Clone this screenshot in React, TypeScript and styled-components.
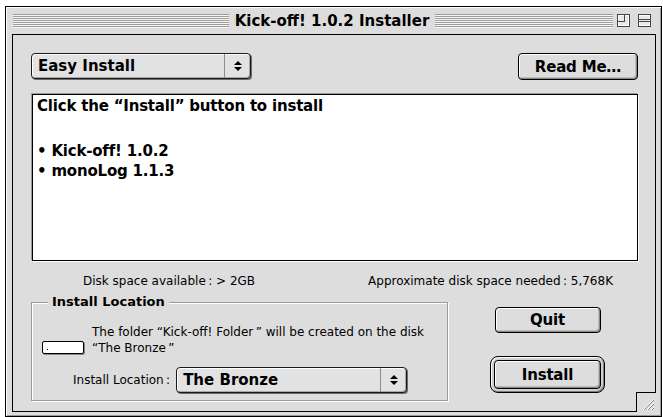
import React from "react";
import styled, { createGlobalStyle } from "styled-components";

const chicago = `"DejaVu Sans", "Liberation Sans", sans-serif`;
const geneva = `"DejaVu Sans", "Liberation Sans", sans-serif`;

const GlobalStyle = createGlobalStyle`
  html, body {
    margin: 0;
    padding: 0;
    background: #ffffff;
  }
  body {
    width: 663px;
    height: 417px;
    overflow: hidden;
  }
`;

const Desk = styled.div`
  width: 663px;
  height: 417px;
  box-sizing: border-box;
  padding: 6px 0 0 5px;
  background: #ffffff;
`;

const Window = styled.div`
  box-sizing: border-box;
  width: 657px;
  height: 411px;
  border: 1px solid #000000;
  background: #dddddd;
  box-shadow: inset 1px 1px 0 #ffffff, inset -1px -1px 0 #9a9a9a;
  display: flex;
  flex-direction: column;
  padding: 0 5px 4px 6px;
`;

const TitleBar = styled.div`
  height: 27px;
  flex: none;
  display: grid;
  grid-template-columns: 1fr auto 1fr;
  align-items: center;
  padding: 0 5px 0 1px;
`;

const Stripes = styled.div`
  height: 14px;
  flex: 1;
  background: repeating-linear-gradient(
    to bottom,
    #9c9c9c 0 1px,
    #f6f6f6 1px 2px
  );
`;

const TitleText = styled.div`
  padding: 0 6px;
  font: bold 15px/18px ${chicago};
  color: #000000;
  white-space: nowrap;
`;

const TitleRight = styled.div`
  display: flex;
  align-items: center;
`;

const Widgets = styled.div`
  display: flex;
  gap: 8px;
  margin-left: 4px;
`;

const Content = styled.div`
  position: relative;
  flex: 1;
  border: 1px solid #000000;
  background: #dddddd;
  padding: 18px 17px 0 18px;
  display: flex;
  flex-direction: column;
`;

const TopRow = styled.div`
  display: flex;
  justify-content: space-between;
  align-items: flex-start;
`;

const Popup = styled.div<{ $width: number; $height: number }>`
  box-sizing: border-box;
  width: ${(p) => p.$width}px;
  height: ${(p) => p.$height}px;
  border: 1px solid #1a1a1a;
  border-radius: 4px;
  background: #e2e2e2;
  box-shadow: inset 1px 1px 0 #ffffff, inset -1px -1px 0 #a8a8a8,
    1px 1px 0 #6a6a6a;
  display: flex;
  align-items: stretch;
  font: bold 15px/18px ${chicago};
  color: #000000;
`;

const PopupLabel = styled.div`
  flex: 1;
  display: flex;
  align-items: center;
  padding-left: 6px;
  white-space: nowrap;
`;

const PopupArrow = styled.div`
  width: 25px;
  border-left: 1px solid #8c8c8c;
  display: flex;
  align-items: center;
  justify-content: center;
`;

const Button = styled.div<{ $width: number; $height: number }>`
  box-sizing: border-box;
  width: ${(p) => p.$width}px;
  height: ${(p) => p.$height}px;
  border: 1px solid #000000;
  border-radius: 4px;
  background: #dddddd;
  box-shadow: inset 1px 1px 0 #ffffff, inset -1px -1px 0 #8a8a8a,
    inset -2px -2px 0 #bcbcbc;
  display: flex;
  align-items: center;
  justify-content: center;
  font: bold 15px/18px ${chicago};
  letter-spacing: -0.2px;
  color: #000000;
  white-space: nowrap;
`;

const ListBox = styled.div`
  box-sizing: border-box;
  margin: 14px 0 0 1px;
  height: 167px;
  background: #ffffff;
  border: 1px solid #000000;
  box-shadow: -1px -1px 0 #9a9a9a, 1px 1px 0 #ffffff;
  padding: 1px 4px;
  font: bold 15px/20px ${chicago};
  letter-spacing: -0.2px;
  color: #000000;
`;

const ListLine = styled.div<{ $gap?: number }>`
  margin-bottom: ${(p) => p.$gap ?? 0}px;
  white-space: nowrap;
`;

const DiskRow = styled.div`
  margin-top: 13px;
  display: flex;
  justify-content: space-between;
  padding: 0 25px 0 52px;
  font: 12px/14px ${geneva};
  color: #000000;
`;

const Lower = styled.div`
  margin-top: 6px;
  display: flex;
  align-items: flex-start;
`;

const GroupBox = styled.fieldset`
  margin: 0;
  width: 417px;
  box-sizing: border-box;
  min-inline-size: 0;
  padding: 14px 0 7px 0;
  border: 1px solid #9a9a9a;
  box-shadow: inset 1px 1px 0 #ffffff, 1px 1px 0 #ffffff;
`;

const GroupTitle = styled.legend`
  margin-left: 16px;
  padding: 0 4px;
  background: #dddddd;
  font: bold 13px/16px ${chicago};
  color: #000000;
`;

const InfoRow = styled.div`
  display: flex;
  align-items: flex-end;
  padding-left: 10px;
`;

const DiskIcon = styled.div`
  position: relative;
  box-sizing: border-box;
  width: 42px;
  height: 13px;
  margin-bottom: 2px;
  border: 1px solid #000000;
  border-radius: 2px;
  background: #ffffff;
  box-shadow: 1px 1px 0 #8a8a8a;

  &::after {
    content: "";
    position: absolute;
    left: 4px;
    bottom: 3px;
    width: 1px;
    height: 1px;
    background: #000000;
  }
`;

const InfoText = styled.div`
  margin-left: 8px;
  font: 12px/16px ${geneva};
  color: #000000;
  white-space: nowrap;
`;

const LocationRow = styled.div`
  margin-top: 11px;
  display: flex;
  align-items: center;
  gap: 6px;
  padding-left: 41px;
`;

const FieldLabel = styled.span`
  font: 12px/14px ${geneva};
  color: #000000;
  white-space: nowrap;
`;

const ButtonColumn = styled.div`
  flex: 1;
  display: flex;
  flex-direction: column;
  align-items: center;
  padding: 13px 0 0 9px;
`;

const DefaultRing = styled.div`
  margin-top: 23px;
  border: 1px solid #000000;
  border-radius: 8px;
  padding: 3px;
  background: #cfcfcf;
  box-shadow: inset 1px 1px 0 #ffffff, inset -1px -1px 0 #7c7c7c;
`;

const GrowBox = styled.div`
  position: absolute;
  right: -1px;
  bottom: -1px;
  width: 19px;
  height: 19px;
  border-left: 1px solid #000000;
  border-top: 1px solid #000000;
  background: #dddddd;
  display: flex;
  align-items: flex-end;
  justify-content: flex-end;
`;

const UpDown = () => (
  <svg width="8" height="12" viewBox="0 0 8 12">
    <polygon points="0,5 4,1 8,5" fill="#000" />
    <polygon points="0,7 4,11 8,7" fill="#000" />
  </svg>
);

const ZoomWidget = () => (
  <svg width="13" height="13" viewBox="0 0 13 13">
    <rect x="0.5" y="0.5" width="12" height="12" fill="#e8e8e8" stroke="#444" />
    <rect x="1.5" y="1.5" width="10" height="10" fill="none" stroke="#fff" />
    <rect x="0.5" y="0.5" width="7" height="7" fill="none" stroke="#444" />
  </svg>
);

const ShadeWidget = () => (
  <svg width="13" height="13" viewBox="0 0 13 13">
    <rect x="0.5" y="0.5" width="12" height="12" fill="#e8e8e8" stroke="#444" />
    <rect x="1.5" y="1.5" width="10" height="10" fill="none" stroke="#fff" />
    <line x1="0.5" y1="5.5" x2="12.5" y2="5.5" stroke="#444" />
    <line x1="0.5" y1="7.5" x2="12.5" y2="7.5" stroke="#444" />
  </svg>
);

const Grip = () => (
  <svg width="17" height="17" viewBox="0 0 17 17">
    {[0, 4, 8].map((o) => (
      <g key={o}>
        <line x1={4 + o} y1={15} x2={15} y2={4 + o} stroke="#ffffff" strokeWidth="1" />
        <line x1={5 + o} y1={15} x2={15} y2={5 + o} stroke="#8a8a8a" strokeWidth="1" />
      </g>
    ))}
  </svg>
);

export default function App() {
  return (
    <>
      <GlobalStyle />
      <Desk>
        <Window>
          <TitleBar>
            <Stripes />
            <TitleText>Kick-off! 1.0.2 Installer</TitleText>
            <TitleRight>
              <Stripes />
              <Widgets>
                <ZoomWidget />
                <ShadeWidget />
              </Widgets>
            </TitleRight>
          </TitleBar>

          <Content>
            <TopRow>
              <Popup $width={220} $height={26}>
                <PopupLabel>Easy Install</PopupLabel>
                <PopupArrow>
                  <UpDown />
                </PopupArrow>
              </Popup>
              <Button $width={120} $height={27}>Read Me…</Button>
            </TopRow>

            <ListBox>
              <ListLine $gap={25}>Click the “Install” button to install</ListLine>
              <ListLine>• Kick-off! 1.0.2</ListLine>
              <ListLine>• monoLog 1.1.3</ListLine>
            </ListBox>

            <DiskRow>
              <span>Disk space available&#8201;: &gt; 2GB</span>
              <span>Approximate disk space needed&#8201;: 5,768K</span>
            </DiskRow>

            <Lower>
              <GroupBox>
                <GroupTitle>Install Location</GroupTitle>
                <InfoRow>
                  <DiskIcon />
                  <InfoText>
                    The folder “Kick-off! Folder&#8201;” will be created on the disk
                    <br />
                    “The Bronze&#8201;”
                  </InfoText>
                </InfoRow>
                <LocationRow>
                  <FieldLabel>Install Location&#8201;:</FieldLabel>
                  <Popup $width={231} $height={26}>
                    <PopupLabel>The Bronze</PopupLabel>
                    <PopupArrow>
                      <UpDown />
                    </PopupArrow>
                  </Popup>
                </LocationRow>
              </GroupBox>

              <ButtonColumn>
                <Button $width={106} $height={26}>Quit</Button>
                <DefaultRing>
                  <Button $width={107} $height={29}>Install</Button>
                </DefaultRing>
              </ButtonColumn>
            </Lower>

            <GrowBox>
              <Grip />
            </GrowBox>
          </Content>
        </Window>
      </Desk>
    </>
  );
}
